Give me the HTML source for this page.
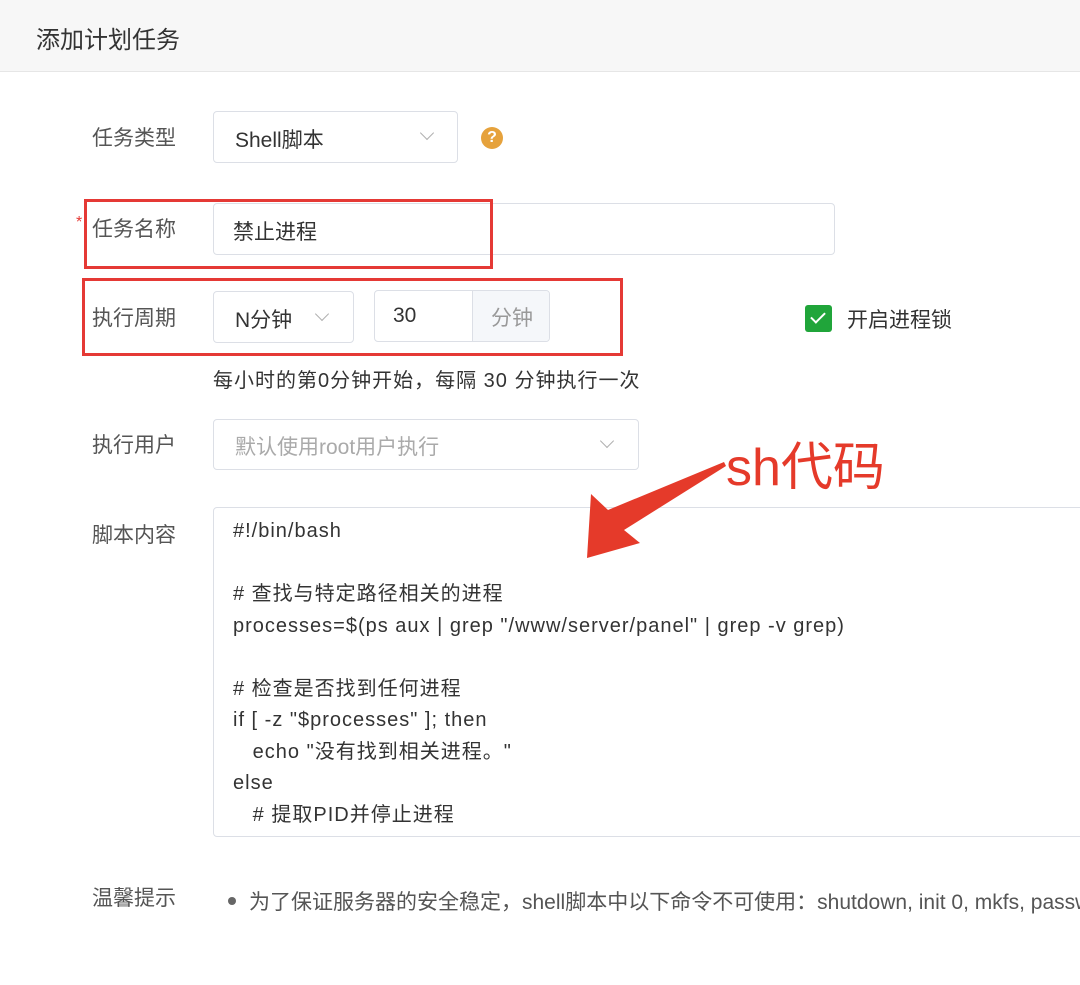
<!DOCTYPE html>
<html><head><meta charset="utf-8"><style>
*{box-sizing:border-box;margin:0;padding:0}
body{width:1080px;height:985px;overflow:hidden;background:#fff;font-family:"Liberation Sans","Noto Sans CJK SC",sans-serif;color:#333;position:relative}
.a{position:absolute;white-space:nowrap}
.hdr{position:absolute;left:0;top:0;width:1080px;height:72px;background:#f7f7f7;border-bottom:1px solid #e6e6e6}
.lbl{font-size:21px;color:#555;line-height:24px}
.box{position:absolute;border:1px solid #dcdfe6;border-radius:4px;background:#fff}
.chev{position:absolute;width:10px;height:10px;border-right:1.5px solid #b0b0b0;border-bottom:1.5px solid #b0b0b0;transform:rotate(45deg)}
.red{position:absolute;border:3px solid #e53935}
.code{font-size:20px;line-height:31.5px;color:#333;letter-spacing:1px}
</style></head><body>
<div class="hdr"></div>
<div class="a" style="left:36px;top:20px;font-size:24px;color:#333">添加计划任务</div>

<div class="a lbl" style="left:92px;top:127px">任务类型</div>
<div class="box" style="left:213px;top:111px;width:245px;height:52px"></div>
<div class="a" style="left:235px;top:124px;font-size:21px">Shell脚本</div>
<div class="chev" style="left:422px;top:128px"></div>
<div class="a" style="left:481px;top:127px;width:22px;height:22px;border-radius:50%;background:#e6a23c;color:#fff;font-size:16px;font-weight:bold;text-align:center;line-height:22px">?</div>

<div class="a" style="left:76px;top:214px;color:#e53935;font-size:16px">*</div>
<div class="a lbl" style="left:92px;top:218px">任务名称</div>
<div class="box" style="left:213px;top:203px;width:622px;height:52px"></div>
<div class="a" style="left:233px;top:216px;font-size:21px">禁止进程</div>
<div class="red" style="left:84px;top:199px;width:409px;height:70px"></div>

<div class="a lbl" style="left:92px;top:307px">执行周期</div>
<div class="box" style="left:213px;top:291px;width:141px;height:52px"></div>
<div class="a" style="left:235px;top:304px;font-size:21px">N分钟</div>
<div class="chev" style="left:317px;top:309px"></div>
<div class="box" style="left:374px;top:290px;width:176px;height:52px;overflow:hidden"><div style="position:absolute;left:97px;top:0;width:80px;height:52px;background:#f5f7fa;border-left:1px solid #dcdfe6"></div></div>
<div class="a" style="left:393px;top:304px;font-size:21px">30</div>
<div class="a" style="left:491px;top:302px;font-size:21px;color:#999">分钟</div>
<div class="red" style="left:82px;top:278px;width:541px;height:78px"></div>
<div class="a" style="left:805px;top:305px;width:27px;height:27px;border-radius:3px;background:#20a53a"></div>
<div class="a" style="left:814px;top:309px;width:8px;height:14px;border-right:2.5px solid #fff;border-bottom:2.5px solid #fff;transform:rotate(45deg)"></div>
<div class="a" style="left:847px;top:304px;font-size:21px">开启进程锁</div>
<div class="a" style="left:213px;top:364px;font-size:20px;letter-spacing:1px;color:#333">每小时的第0分钟开始，每隔 30 分钟执行一次</div>

<div class="a lbl" style="left:92px;top:434px">执行用户</div>
<div class="box" style="left:213px;top:419px;width:426px;height:51px"></div>
<div class="a" style="left:235px;top:431px;font-size:21px;color:#aaa">默认使用root用户执行</div>
<div class="chev" style="left:602px;top:436px"></div>

<div class="a lbl" style="left:92px;top:524px">脚本内容</div>
<div class="box" style="left:213px;top:507px;width:880px;height:330px;overflow:hidden">
<div class="code" style="position:absolute;left:19px;top:8px;white-space:pre">#!/bin/bash

# 查找与特定路径相关的进程
processes=$(ps aux | grep "/www/server/panel" | grep -v grep)

# 检查是否找到任何进程
if [ -z "$processes" ]; then
   echo "没有找到相关进程。"
else
   # 提取PID并停止进程
   pids=$(echo "$processes")</div></div>

<div class="a lbl" style="left:92px;top:887px">温馨提示</div>
<div class="a" style="left:228px;top:897px;width:8px;height:8px;border-radius:50%;background:#666"></div>
<div class="a" style="left:249px;top:886px;font-size:21px;color:#555">为了保证服务器的安全稳定，shell脚本中以下命令不可使用：shutdown, init 0, mkfs, passwd</div>

<svg class="a" style="left:0;top:0" width="1080" height="985"><polygon points="587,558 591,494 608,510 724,462 726,466 624,530 640,543" fill="#e53a2a"/></svg>
<div class="a" style="left:726px;top:438px;font-size:52px;color:#e53a2a;line-height:60px">sh代码</div>
</body></html>
